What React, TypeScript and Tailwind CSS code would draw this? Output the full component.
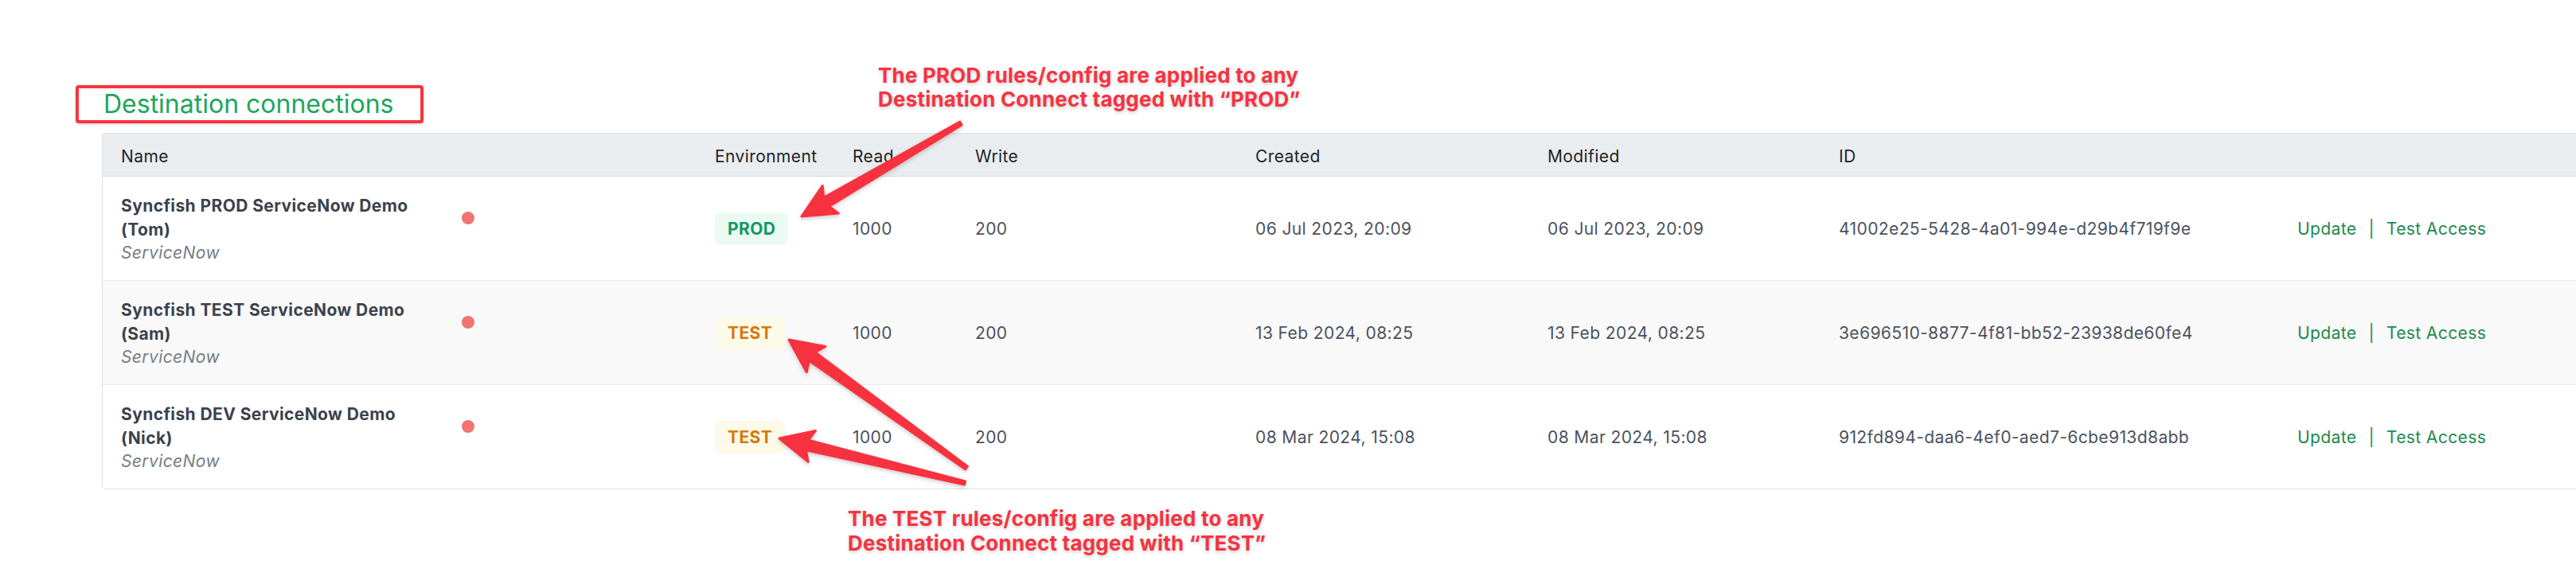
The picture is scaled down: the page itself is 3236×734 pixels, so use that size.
import React from "react";

type Row = {
  name: string;
  env: "PROD" | "TEST";
  read: string;
  write: string;
  created: string;
  modified: string;
  id: string;
  alt: boolean;
};

const rows: Row[] = [
  {
    name: "Syncfish PROD ServiceNow Demo (Tom)",
    env: "PROD",
    read: "1000",
    write: "200",
    created: "06 Jul 2023, 20:09",
    modified: "06 Jul 2023, 20:09",
    id: "41002e25-5428-4a01-994e-d29b4f719f9e",
    alt: false,
  },
  {
    name: "Syncfish TEST ServiceNow Demo (Sam)",
    env: "TEST",
    read: "1000",
    write: "200",
    created: "13 Feb 2024, 08:25",
    modified: "13 Feb 2024, 08:25",
    id: "3e696510-8877-4f81-bb52-23938de60fe4",
    alt: true,
  },
  {
    name: "Syncfish DEV ServiceNow Demo (Nick)",
    env: "TEST",
    read: "1000",
    write: "200",
    created: "08 Mar 2024, 15:08",
    modified: "08 Mar 2024, 15:08",
    id: "912fd894-daa6-4ef0-aed7-6cbe913d8abb",
    alt: false,
  },
];

const gridCols =
  "grid grid-cols-[745px_173px_154px_352px_367px_366px_576px_1fr]";

function arrowPoints(
  tx: number,
  ty: number,
  px: number,
  py: number,
  L = 42,
  W = 20,
  w1 = 6.5,
  w0 = 2.2
) {
  const dx = px - tx;
  const dy = py - ty;
  const len = Math.sqrt(dx * dx + dy * dy);
  const ux = dx / len;
  const uy = dy / len;
  const nx = -uy;
  const ny = ux;
  const bx = px - ux * L;
  const by = py - uy * L;
  const nb = px - ux * (L - 6);
  const nby = py - uy * (L - 6);
  const pts: [number, number][] = [
    [tx + nx * w0, ty + ny * w0],
    [nb + nx * w1, nby + ny * w1],
    [bx + nx * W, by + ny * W],
    [px, py],
    [bx - nx * W, by - ny * W],
    [nb - nx * w1, nby - ny * w1],
    [tx - nx * w0, ty - ny * w0],
  ];
  return pts.map((p) => `${p[0].toFixed(1)},${p[1].toFixed(1)}`).join(" ");
}

function Badge({ env }: { env: "PROD" | "TEST" }) {
  if (env === "PROD") {
    return (
      <span className="inline-block rounded-[8px] bg-[#ebfbf3] px-[16px] py-[8px] text-[21px] font-bold leading-[25px] text-[#0f9a63]">
        PROD
      </span>
    );
  }
  return (
    <span className="inline-block rounded-[8px] bg-[#fefae9] px-[16px] py-[8px] text-[21px] font-bold leading-[25px] text-[#d8790a]">
      TEST
    </span>
  );
}

export default function App() {
  return (
    <div className="relative h-[734px] w-[3236px] overflow-hidden bg-white font-['Inter','Noto_Sans',sans-serif]">
      <div className="pl-[95px] pt-[107px]">
        <div className="w-[437px] rounded-[4px] border-[4px] border-[#f7343f] pl-[31px] shadow-[0_1px_4px_rgba(0,0,0,0.18)]">
          <span className="block text-[32px] leading-[40px] text-[#20a55b]">
            Destination connections
          </span>
        </div>

        <div className="ml-[33px] mt-[12px] w-[3200px] rounded-[4px] border border-[#dde0e4] text-[21px] leading-[30px] tracking-[0.4px]">
          <div
            className={`${gridCols} border-b border-[#d6dadd] bg-[#e9edf0] pb-[9px] pt-[14px] text-[#1f2328]`}
          >
            <div className="px-[23px]">Name</div>
            <div className="px-[24px]">Environment</div>
            <div className="px-[24px]">Read</div>
            <div className="px-[24px]">Write</div>
            <div className="px-[24px]">Created</div>
            <div className="px-[24px]">Modified</div>
            <div className="px-[24px]">ID</div>
            <div className="px-[24px]"></div>
          </div>

          {rows.map((r, i) => (
            <div
              key={i}
              className={`${gridCols} items-center pb-[21px] pt-[22px] text-[#4b5260] ${
                i < rows.length - 1 ? "border-b border-[#e8eaec]" : ""
              } ${r.alt ? "bg-[#f9f9f9]" : "bg-white"}`}
            >
              <div className="flex items-start px-[23px]">
                <div className="w-[380px]">
                  <div className="font-bold leading-[30px] text-[#3b424e]">
                    {r.name}
                  </div>
                  <div className="italic leading-[27px] text-[#767d88]">
                    ServiceNow
                  </div>
                </div>
                <span className="ml-[48px] mt-[22px] h-[16px] w-[16px] shrink-0 rounded-full bg-[#f37272]"></span>
              </div>
              <div className="px-[24px]">
                <Badge env={r.env} />
              </div>
              <div className="px-[24px]">{r.read}</div>
              <div className="px-[24px]">{r.write}</div>
              <div className="px-[24px]">{r.created}</div>
              <div className="px-[24px]">{r.modified}</div>
              <div className="px-[24px]">{r.id}</div>
              <div className="flex gap-[15px] px-[24px] text-[#1c8a4b]">
                <span>Update</span>
                <span>|</span>
                <span>Test Access</span>
              </div>
            </div>
          ))}
        </div>
      </div>

      {/* annotations */}
      <div className="absolute left-[1103px] top-[80px] whitespace-nowrap text-[26px] font-bold leading-[30px] tracking-[0.2px] text-[#f8323f] [text-shadow:0_2px_4px_rgba(0,0,0,0.2)]">
        <div>The PROD rules/config are applied to any</div>
        <div>Destination Connect tagged with “PROD”</div>
      </div>
      <div className="absolute left-[1065px] top-[636px] whitespace-nowrap text-[26px] font-bold leading-[31px] tracking-[0.2px] text-[#f8323f] [text-shadow:0_2px_4px_rgba(0,0,0,0.2)]">
        <div>The TEST rules/config are applied to any</div>
        <div>Destination Connect tagged with “TEST”</div>
      </div>

      <svg
        className="pointer-events-none absolute left-0 top-0"
        width={3236}
        height={734}
        viewBox="0 0 3236 734"
      >
        <defs>
          <filter id="ash" x="-20%" y="-20%" width="140%" height="140%">
            <feDropShadow dx="0" dy="2" stdDeviation="2.5" floodColor="#000" floodOpacity="0.22" />
          </filter>
        </defs>
        <g fill="#f7333f" stroke="#f7333f" strokeWidth={3} strokeLinejoin="round" filter="url(#ash)">
          <polygon points={arrowPoints(1207, 155, 1007, 272)} />
          <polygon points={arrowPoints(1214, 588, 991, 427)} />
          <polygon points={arrowPoints(1212, 607, 979, 551)} />
        </g>
      </svg>
    </div>
  );
}
